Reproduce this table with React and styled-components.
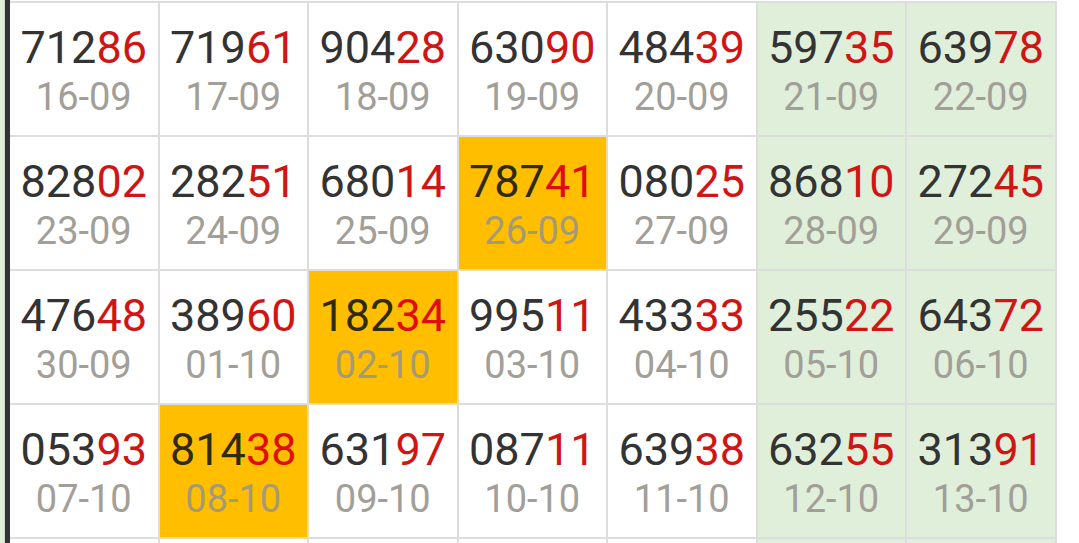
import React from "react";
import styled, { createGlobalStyle } from "styled-components";

const GlobalStyle = createGlobalStyle`
  html, body {
    margin: 0;
    padding: 0;
    background: #ffffff;
    overflow: hidden;
  }
  body {
    font-family: Roboto, "Noto Sans", sans-serif;
  }
`;

const rows = [
  [
    ["71286", "16-09"],
    ["71961", "17-09"],
    ["90428", "18-09"],
    ["63090", "19-09"],
    ["48439", "20-09"],
    ["59735", "21-09"],
    ["63978", "22-09"]
  ],
  [
    ["82802", "23-09"],
    ["28251", "24-09"],
    ["68014", "25-09"],
    ["78741", "26-09", true],
    ["08025", "27-09"],
    ["86810", "28-09"],
    ["27245", "29-09"]
  ],
  [
    ["47648", "30-09"],
    ["38960", "01-10"],
    ["18234", "02-10", true],
    ["99511", "03-10"],
    ["43333", "04-10"],
    ["25522", "05-10"],
    ["64372", "06-10"]
  ],
  [
    ["05393", "07-10"],
    ["81438", "08-10", true],
    ["63197", "09-10"],
    ["08711", "10-10"],
    ["63938", "11-10"],
    ["63255", "12-10"],
    ["31391", "13-10"]
  ],
  [[], [], [], [], [], [], []]
];

const cellBackground = (hit, weekend) => {
  if (hit) return "#ffbf00";
  if (weekend) return "#dfefda";
  return "#ffffff";
};

const App = () => {
  return (
    <>
      <GlobalStyle />
      <Page>
        <SideStrip />
        <Rail />
        <Board>
          {rows.map((row, r) =>
            row.map(([num, date, hit], c) => (
              <Cell key={r + "-" + c} hit={hit} weekend={c >= 5}>
                {num && (
                  <>
                    <Number hit={hit}>
                      {num.slice(0, 3)}
                      <Tail hit={hit}>{num.slice(3)}</Tail>
                    </Number>
                    <DateLabel hit={hit}>{date}</DateLabel>
                  </>
                )}
              </Cell>
            ))
          )}
        </Board>
      </Page>
    </>
  );
};

const Page = styled.div`
  display: flex;
  height: 543px;
  width: 1079px;
  overflow: hidden;
`;

const SideStrip = styled.div`
  width: 4px;
  flex-shrink: 0;
  background: #dcefd7;
  border-right: 1px solid #cfd6cc;
`;

const Rail = styled.div`
  width: 5px;
  flex-shrink: 0;
  background: #333333;
`;

const Board = styled.div`
  display: grid;
  grid-template-columns: repeat(7, 149.5px);
  grid-auto-rows: 134px;
  align-content: start;
  margin-top: 1px;
  border-top: 2px solid #dddddd;
`;

const Cell = styled.div`
  box-sizing: border-box;
  display: flex;
  flex-direction: column;
  align-items: center;
  gap: 8px;
  padding-top: 22px;
  background: ${p => cellBackground(p.hit, p.weekend)};
  border-right: 2px solid ${p => (p.hit ? "#eadcae" : "#dddddd")};
  border-bottom: 2px solid ${p => (p.hit ? "#eadcae" : "#dddddd")};
`;

const Number = styled.div`
  font-size: 45px;
  line-height: 45px;
  color: ${p => (p.hit ? "#302a10" : "#333333")};
  white-space: nowrap;
`;

const Tail = styled.span`
  color: ${p => (p.hit ? "#e00d0d" : "#d01515")};
`;

const DateLabel = styled.div`
  font-size: 38px;
  line-height: 38px;
  color: ${p => (p.hit ? "#a59a76" : "#a29e98")};
  white-space: nowrap;
`;

export default App;
